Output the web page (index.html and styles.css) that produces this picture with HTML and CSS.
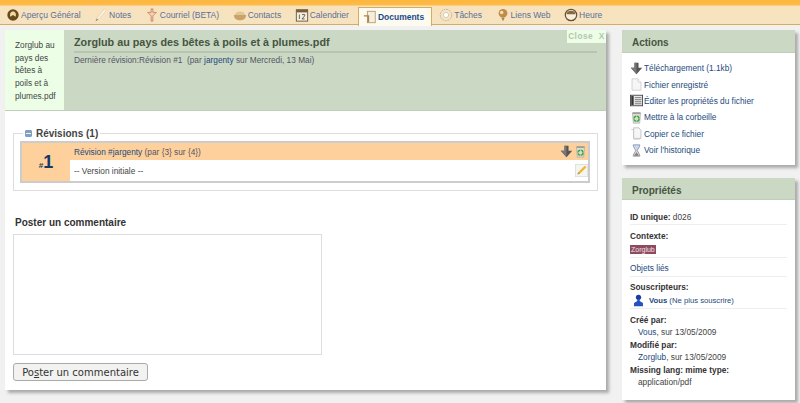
FILE: index.html
```html
<!DOCTYPE html>
<html lang="fr">
<head>
<meta charset="utf-8">
<title>Documents</title>
<link rel="stylesheet" href="styles.css">
</head>
<body>
<svg class="defs" width="0" height="0" aria-hidden="true">
  <symbol id="i-down" viewBox="0 0 16 16"><path d="M5.500 1h5v6H15l-7 8-7-8h4.500z" fill="#555"/><path d="M5.500 1h2.500v14L1 7h4.500z" fill="#777"/></symbol>
  <symbol id="i-trash" viewBox="0 0 16 16"><path d="M3 3h10l-1 12H4z" fill="#d8dcd0" stroke="#999" stroke-width=".6"/><rect x="3" y="1.500" width="10" height="2" fill="#999"/><circle cx="8" cy="9.500" r="3.200" fill="none" stroke="#3aa33a" stroke-width="1.800" stroke-dasharray="4 1"/></symbol>
  <symbol id="i-pencil" viewBox="0 0 16 16"><rect x=".5" y=".5" width="15" height="15" fill="#f4f4f0" stroke="#ddd"/><path d="M12 2l2 2-8 8-3 1 1-3z" fill="#f0b820"/><path d="M4 10l2 2-3 1z" fill="#999"/></symbol>
  <symbol id="i-page" viewBox="0 0 16 16"><path d="M2.500 1H10l3.500 4v10h-11z" fill="#f6f6f6" stroke="#ccc"/><path d="M10 1v4h3.500" fill="#fff" stroke="#ccc"/></symbol>
  <symbol id="i-props" viewBox="0 0 16 16"><rect x=".5" y="1.500" width="15" height="13" fill="#e8e8e8" stroke="#333"/><rect x="1.500" y="2.500" width="3" height="11" fill="#333"/><path d="M6 4.500h8M6 7h8M6 9.500h8M6 12h8" stroke="#666"/></symbol>
  <symbol id="i-copy" viewBox="0 0 16 16"><path d="M1.500 3h3v12h8" fill="none" stroke="#ccc"/><path d="M4.500 1H11l2.500 3v10h-9z" fill="#f6f6f6" stroke="#bbb"/></symbol>
  <symbol id="i-hour" viewBox="0 0 16 16"><path d="M4 1h8v1.500L9 8l3 5.500V15H4v-1.500L7 8 4 2.500z" fill="#cfd8ea" stroke="#5a6a90" stroke-width=".7"/><path d="M5 14.500L8 10l3 4.500z" fill="#9a7a50"/></symbol>
  <symbol id="i-user" viewBox="0 0 16 16"><circle cx="8" cy="4" r="3.200" fill="#1c3d9c"/><path d="M6.500 6h3v2.500l4 2.500v4H2.500v-4l4-2.500z" fill="#2450c0"/></symbol>
</svg>
<nav class="tabs">
  <a class="tab"><svg class="tico" viewBox="0 0 16 16"><circle cx="8" cy="8" r="6.500" fill="#6a4a1c"/><path d="M8 4c3 0 4 3 3 6l-3-2-3 2c-1-3 0-6 3-6z" fill="#f0d8a0"/></svg>Aperçu Général</a>
  <a class="tab"><svg class="tico" viewBox="0 0 16 16"><path d="M12 1l2 2-9 10-3 2 1-3z" fill="#faf6ea" stroke="#d8c49a" stroke-width=".6"/><path d="M2 15l3-2-2-1z" fill="#a88648"/></svg>Notes</a>
  <a class="tab"><svg class="tico" viewBox="0 0 16 16"><path d="M7 1h2v4h4L9 9v6H7V9L3 5h4z" fill="#f0d4ac" stroke="#b8604a" stroke-width=".7"/></svg>Courriel (BETA)</a>
  <a class="tab"><svg class="tico" viewBox="0 0 16 16"><path d="M1 8h14c0 4-3 6-7 6s-7-2-7-6z" fill="#c9a368"/><path d="M2 8c1-3 3-4 6-4s5 1 6 4z" fill="#e0c694"/></svg>Contacts</a>
  <a class="tab"><svg class="tico" viewBox="0 0 16 16"><rect x="1.500" y="2" width="13" height="13" fill="#f4eedf" stroke="#6a5030"/><rect x="1.500" y="2" width="13" height="3" fill="#7a5c36"/><path d="M5 7.500v5M8 7.500h3v1.500l-3 3.500h3" fill="none" stroke="#555"/></svg>Calendrier</a>
  <a class="tab active"><svg class="tico" viewBox="0 0 16 16"><rect x="5" y="1.500" width="9" height="13" fill="#f4eee0" stroke="#b89a68"/><path d="M1 6h5v1.500H1zM5 6h2v8H5z" fill="#a88648"/></svg>Documents</a>
  <a class="tab"><svg class="tico" viewBox="0 0 16 16"><circle cx="8" cy="8" r="6.500" fill="#f0e6d0" stroke="#c9a878" stroke-dasharray="2 1"/><circle cx="8" cy="8" r="3" fill="#fff" stroke="#dcc49c"/></svg>Tâches</a>
  <a class="tab"><svg class="tico" viewBox="0 0 16 16"><circle cx="8" cy="6" r="5" fill="#c28a48"/><circle cx="6.500" cy="5" r="2" fill="#f0e0c0"/><path d="M6 11h4l-2 4z" fill="#ab8454"/></svg>Liens Web</a>
  <a class="tab"><svg class="tico" viewBox="0 0 16 16"><circle cx="8" cy="8" r="6.500" fill="#f6efdc" stroke="#6a5030" stroke-width="1.400"/><path d="M3 7a5 4 0 0 1 10 0z" fill="#8a6a3c"/></svg>Heure</a>
</nav>
<div class="page">
  <main class="main">
    <header class="head">
      <div class="thumb">Zorglub au pays des bêtes à poils et à plumes.pdf</div>
      <div class="title">
        <h1>Zorglub au pays des bêtes à poils et à plumes.pdf</h1>
        <p>Dernière révision:Révision #1 &nbsp;(par <a>jargenty</a> sur Mercredi, 13 Mai)</p>
        <span class="close">Close &nbsp;X</span>
      </div>
    </header>
    <fieldset class="revs">
      <legend><span class="minus"></span>Révisions (1)</legend>
      <div class="rev">
        <div class="num"><small>#</small>1</div>
        <div class="rbody">
          <div class="rtop"><span class="rtxt"><a>Révision #jargenty</a> (par {3} sur {4})</span>
            <svg class="ic"><use href="#i-down"/></svg><svg class="ic"><use href="#i-trash"/></svg></div>
          <div class="rdesc"><span>-- Version initiale --</span><svg class="ic"><use href="#i-pencil"/></svg></div>
        </div>
      </div>
    </fieldset>
    <section class="post">
      <h2>Poster un commentaire</h2>
      <textarea class="area"></textarea>
      <button class="btn" type="button">Po<u>s</u>ter un commentaire</button>
    </section>
  </main>
  <aside class="side">
    <section class="card actions">
      <h3>Actions</h3>
      <ul>
        <li><svg class="ic"><use href="#i-down"/></svg><a>Téléchargement (1.1kb)</a></li>
        <li><svg class="ic"><use href="#i-page"/></svg><a>Fichier enregistré</a></li>
        <li><svg class="ic"><use href="#i-props"/></svg><a>Éditer les propriétés du fichier</a></li>
        <li><svg class="ic"><use href="#i-trash"/></svg><a>Mettre à la corbeille</a></li>
        <li><svg class="ic"><use href="#i-copy"/></svg><a>Copier ce fichier</a></li>
        <li><svg class="ic"><use href="#i-hour"/></svg><a>Voir l'historique</a></li>
      </ul>
    </section>
    <section class="card props">
      <h3>Propriétés</h3>
      <div class="pbody">
        <div class="row"><b>ID unique:</b> d026</div>
        <div class="row"><b>Contexte:</b><div class="ctx"><span>Zorglub</span></div></div>
        <div class="row row-link"><a>Objets liés</a></div>
        <div class="row"><b>Souscripteurs:</b><div class="sub"><svg class="ic"><use href="#i-user"/></svg><a><b>Vous</b> (Ne plus souscrire)</a></div></div>
        <div class="meta">
          <b>Créé par:</b><div class="ind"><a>Vous</a>, sur 13/05/2009</div>
          <b>Modifié par:</b><div class="ind"><a>Zorglub</a>, sur 13/05/2009</div>
          <b>Missing lang: mime type:</b><div class="ind">application/pdf</div>
        </div>
      </div>
    </section>
  </aside>
</div>
</body>
</html>
```
FILE: styles.css
```css
* { box-sizing: border-box; }
html, body { margin: 0; height: 403px; overflow: hidden; }
body { background: #f1f1f1; font-family: "Liberation Sans", Arial, sans-serif; font-size: 8.300px; color: #444; }
.defs { position: absolute; }
a { color: #234a7d; }
.tabs { height: 25px; padding: 6px 0 0 6px; display: flex; gap: 13.500px; background: linear-gradient(#fdb63d 0, #fdbb48 5px, #f8e2bc 6px, #f5e3c0 24px); border-bottom: 1px solid #d9ab5e; }
.tab { display: flex; align-items: center; gap: 1px; height: 18px; font-size: 8.500px; color: #5a6f9a; white-space: nowrap; }
.tico { width: 14px; height: 14px; flex: none; }
.tab.active { height: 19px; margin: 1px -6.500px 0 -4.500px; padding: 0 7px 0 4px; background: #fdfaf0; border: 1px solid #d9ab5e; border-bottom: 0; font-weight: bold; color: #234a8d; }
.page { display: flex; align-items: flex-start; padding: 5px 5px 0; gap: 16px; }
.main { width: 601px; height: 360px; background: #fff; box-shadow: 3px 3px 3px #aaa; flex: none; }
.head { display: flex; height: 81px; background: #cad8c4; border-bottom: 1px solid #bfcdb9; }
.thumb { width: 59px; flex: none; padding: 9px 3px 0 10px; background: #ecffe6; line-height: 12.700px; color: #444; }
.title { position: relative; flex: 1; padding: 5px 9px 0 10px; }
.title h1 { margin: 0; height: 18px; font-size: 10.800px; line-height: 15px; color: #45553f; border-bottom: 2px solid #b6c4b0; }
.title p { margin: 0; padding-top: 1px; color: #556; line-height: 12px; }
.title p a { color: #234a7d; }
.close { position: absolute; top: 0; right: 0; width: 39px; height: 13px; background: #ecffe6; color: #b6c4b0; font-weight: bold; letter-spacing: .5px; line-height: 12px; text-align: center; }
.revs { margin: 17px 8px 0 8px; padding: 0 7px 0 6px; height: 63px; border: 1px solid #ddd; }
.revs legend { margin-left: 3px; padding: 0 2px; font-size: 10px; font-weight: bold; color: #444; line-height: 11px; display: flex; align-items: center; }
.minus { width: 7px; height: 7px; margin-right: 4px; border-radius: 1px; background: linear-gradient(#7fa0c0 0 35%, #eef3f8 35% 65%, #7fa0c0 65%); border: 1px solid #7f9fc0; }
.rev { display: flex; height: 42px; margin-top: 2px; background: #fdd09c; border: 2px solid #ccc; }
.num { width: 48px; flex: none; text-align: center; font-size: 18px; font-weight: bold; color: #123a68; line-height: 38px; }
.num small { font-size: 8px; }
.rbody { flex: 1; display: flex; flex-direction: column; }
.rtop { height: 17px; display: flex; align-items: center; padding: 0 1px 0 4px; color: #556; gap: 1px; }
.rtop a { color: #234a7d; }
.rtxt { flex: 1; }
.rdesc { flex: 1; display: flex; align-items: center; background: #fff; padding-left: 4px; color: #444; }
.rdesc span { flex: 1; }
.ic { width: 13px; height: 13px; flex: none; }
.post { padding-left: 8px; }
.post h2 { margin: 25px 0 4px; font-size: 10px; line-height: 14px; color: #333; padding-left: 2px; }
.area { display: block; width: 309px; height: 121px; background: #fff; border: 1px solid #ddd; resize: none; }
.btn { display: block; margin-top: 8px; width: 135px; height: 18px; padding: 0; background: #f2f2f0; border: 1px solid #aaa; border-radius: 3px; font-family: "DejaVu Sans", sans-serif; font-size: 10px; color: #333; }
.side { width: 173px; flex: none; display: flex; flex-direction: column; gap: 13px; }
.card { background: #fff; box-shadow: 3px 3px 3px #aaa; }
.card h3 { margin: 0; height: 22px; padding: 2px 0 0 10px; background: #cad8c4; border-bottom: 1px solid #bfcdb9; font-size: 10px; line-height: 22px; color: #45553f; }
.actions { height: 135px; }
.actions h3 { height: 23px; }
.actions ul { list-style: none; margin: 0; padding: 7px 0 0 8px; }
.actions li { display: flex; align-items: center; height: 16.400px; color: #234a7d; }
.actions a { margin-left: 1px; }
.props { height: 222px; }
.pbody { padding: 11px 8px 0 8px; }
.row { border-bottom: 1px solid #eee; padding-bottom: 1px; margin-bottom: 5px; line-height: 12px; }
.row-link { margin-top: -1px; padding-bottom: 2px; margin-bottom: 4px; }
.row b, .meta b { color: #333; }
.ctx { margin: 3px 0; line-height: 8px; height: 8px; }
.ctx span { display: inline-block; background: #8e4a60; color: #f0e0e5; font-size: 7px; padding: 0 1px; line-height: 9px; }
.sub { display: flex; align-items: center; margin-top: 1px; height: 13px; padding-left: 2px; font-size: 7.700px; gap: 4px; color: #234a7d; }
.sub b { color: #234a7d; }
.meta { line-height: 12.400px; }
.meta b { display: block; }
.ind { padding-left: 8px; }
```
